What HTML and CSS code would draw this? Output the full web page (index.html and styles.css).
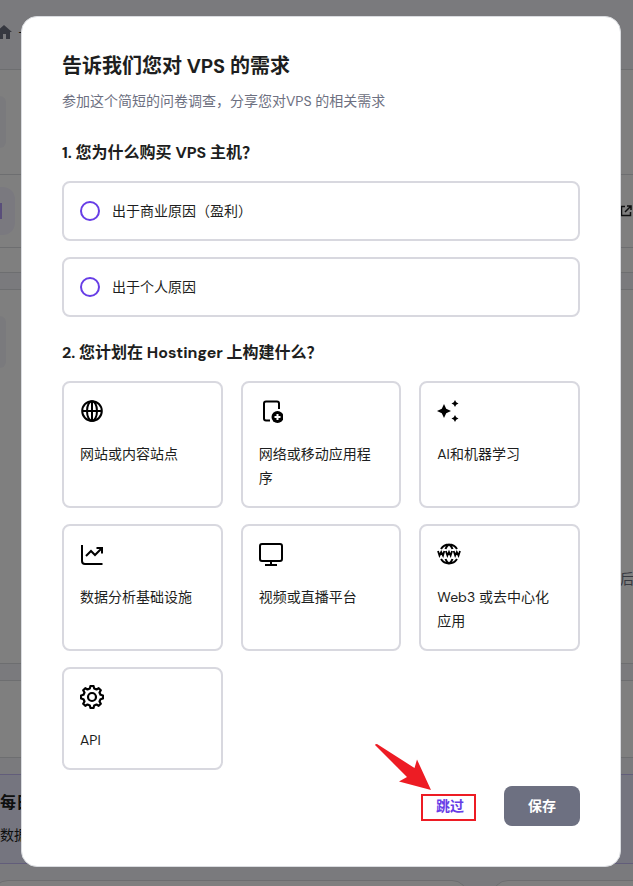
FILE: index.html
```html
<!DOCTYPE html>
<html lang="zh-CN">
<head>
  <meta charset="UTF-8" />
  <meta name="viewport" content="width=device-width, initial-scale=1.0"/>
  <title>VPS</title>
  <link rel="stylesheet" href="styles.css">
</head>
<body>
  <!-- Dashboard behind the dialog -->
  <div class="page" aria-hidden="true">
    <div class="topbar">
      <svg class="home" viewBox="0 0 12 14"><path d="M4 0 12 7H10V14H6V9H3V14H0V3.500z"/></svg>
      <span>-</span>
    </div>
    <div class="row row-tall"><i class="tile"></i></div>
    <div class="row row-link">
      <i class="tile tile-purple"></i>
      <svg class="external" viewBox="0 0 12 12"><path d="M5 1.500H1.500V10.500H10.500V7M7 1H11V5M11 1 5 7"/></svg>
    </div>
    <div class="row row-short"></div>
    <div class="panel panel-main">
      <i class="tile"></i>
      <span class="after">后</span>
    </div>
    <div class="panel panel-small"></div>
    <div class="panel promo">
      <strong>每日</strong>
      <span>数据</span>
    </div>
    <div class="bottom-cards">
      <div class="bottom-card"></div>
      <div class="bottom-card"></div>
    </div>
  </div>

  <div class="overlay">
    <form class="modal" role="dialog" aria-labelledby="title">
      <h1 id="title">告诉我们您对 VPS 的需求</h1>
      <p class="subtitle">参加这个简短的问卷调查，分享您对VPS 的相关需求</p>

      <h2 id="q1">1. 您为什么购买 VPS 主机？</h2>
      <div class="options" role="radiogroup" aria-labelledby="q1">
        <label class="option"><input type="radio" name="reason" value="business">出于商业原因（盈利）</label>
        <label class="option"><input type="radio" name="reason" value="personal">出于个人原因</label>
      </div>

      <h2 id="q2">2. 您计划在 Hostinger 上构建什么？</h2>
      <div class="cards" role="group" aria-labelledby="q2">
        <label class="card">
          <input type="checkbox" name="build" value="website">
          <svg class="icon" viewBox="0 0 24 24"><circle cx="12" cy="12" r="9.800"/><ellipse cx="12" cy="12" rx="5" ry="9.800"/><path d="M12 2V22M2 12H22"/></svg>
          <span>网站或内容站点</span>
        </label>
        <label class="card">
          <input type="checkbox" name="build" value="app">
          <svg class="icon" viewBox="0 0 24 24"><path d="M11 21.500H7Q5 21.500 5 19.500V4.500Q5 2.500 7 2.500H18Q20 2.500 20 4.500V10"/><circle class="fill" cx="18.500" cy="18" r="6"/><path class="light" d="M18.500 15V21M15.500 18H21.500"/></svg>
          <span>网络或移动应用程序</span>
        </label>
        <label class="card">
          <input type="checkbox" name="build" value="ai">
          <svg class="icon" viewBox="0 0 24 24"><path class="fill" d="M7 5 9.200 9.800 14 12 9.200 14.200 7 19 4.800 14.200 0 12 4.800 9.800zM18 1 19.200 3.300 21.500 4.500 19.200 5.700 18 8 16.800 5.700 14.500 4.500 16.800 3.300zM18 16 19.200 18.300 21.500 19.500 19.200 20.700 18 23 16.800 20.700 14.500 19.500 16.800 18.300z"/></svg>
          <span>AI和机器学习</span>
        </label>
        <label class="card">
          <input type="checkbox" name="build" value="analytics">
          <svg class="icon" viewBox="0 0 24 24"><path d="M2 3V19Q2 22 5 22H22.500M6 14 11 9 15 13 21.500 6.500M16.500 6H22V11.500"/></svg>
          <span>数据分析基础设施</span>
        </label>
        <label class="card">
          <input type="checkbox" name="build" value="video">
          <svg class="icon" viewBox="0 0 24 24"><rect x="1" y="2" width="22" height="17" rx="2"/><path d="M12 19V22M6 23H18"/></svg>
          <span>视频或直播平台</span>
        </label>
        <label class="card">
          <input type="checkbox" name="build" value="web3">
          <svg class="icon" viewBox="0 0 24 24"><path d="M4 7A9.500 9.500 0 0 1 20 7M4 17A9.500 9.500 0 0 0 20 17M8.500 7Q9.500 4 12 2.500Q14.500 4 15.500 7M8.500 17Q9.500 20 12 21.500Q14.500 20 15.500 17"/><path class="waves" d="M1 9 2.500 13.500 4.200 10 6 13.500 7.300 9M8.900 9 10.400 13.500 12 10 13.600 13.500 15.100 9M16.700 9 18.200 13.500 19.800 10 21.500 13.500 23 9"/></svg>
          <span>Web3 或去中心化应用</span>
        </label>
        <label class="card">
          <input type="checkbox" name="build" value="api">
          <svg class="icon gear" viewBox="0 0 24 24"><path d="M9.800 3.500 10.500 1H13.500L14.200 3.500 16.500 4.500 18.700 3.200 20.800 5.300 19.500 7.500 20.500 9.800 23 10.500V13.500L20.500 14.200 19.500 16.500 20.800 18.700 18.700 20.800 16.500 19.500 14.200 20.500 13.500 23H10.500L9.800 20.500 7.500 19.500 5.300 20.800 3.200 18.700 4.500 16.500 3.500 14.200 1 13.500V10.500L3.500 9.800 4.500 7.500 3.200 5.300 5.300 3.200 7.500 4.500z"/><circle cx="12" cy="12" r="4"/></svg>
          <span>API</span>
        </label>
      </div>

      <div class="actions">
        <div class="skip-wrap">
          <button type="button" class="btn btn-skip">跳过</button>
          <span class="marker"></span>
          <svg class="arrow" viewBox="0 0 56 46"><path d="M0 1Q0 0 2 0L39.500 24 42 15.500 56 46 24 37.500 32 33z"/></svg>
        </div>
        <button type="submit" class="btn btn-save">保存</button>
      </div>
    </form>
  </div>
</body>
</html>
```

FILE: styles.css
```css
:root {
  --text: #1d1e20;
  --muted: #6d7081;
  --border: #dadce0;
  --card-border: #d8d8df;
  --purple: #673de6;
  --bg: #f5f5fa;
  --red: #ed1c24;
}
* {
  box-sizing: border-box;
}
body {
  margin: 0;
  font-family: "DM Sans", Inter, "Noto Sans CJK SC", sans-serif;
  font-size: 14px;
  line-height: 24px;
  color: var(--text);
  background: var(--bg);
}

/* Dashboard */
.page {
  height: 100vh;
  overflow: hidden;
}
.topbar {
  display: flex;
  align-items: center;
  gap: 6px;
  height: 70px;
  padding-bottom: 6px;
  border-bottom: 1px solid var(--border);
}
.home {
  width: 12px;
  height: 14px;
  fill: #6d7081;
}
.row {
  display: flex;
  align-items: center;
  justify-content: space-between;
  background: #fff;
  border-bottom: 1px solid var(--border);
}
.row-tall {
  height: 105px;
}
.row-link {
  height: 73px;
}
.row-short {
  height: 25px;
}
.tile {
  width: 6px;
  height: 52px;
  border-radius: 0 12px 12px 0;
  background: var(--bg);
}
.tile-purple {
  width: 15px;
  height: 48px;
  padding: 16px 0;
  background: #f5f3ff;
}
.tile-purple::before {
  content: "";
  display: block;
  width: 2px;
  height: 16px;
  background: #b39df5;
}
.external {
  width: 12px;
  height: 12px;
  margin-right: 1px;
  fill: none;
  stroke: var(--text);
  stroke-width: 1.5;
}
.panel {
  margin-top: 16px;
  background: #fff;
  border: solid var(--border);
  border-width: 1px 0;
}
.panel-main {
  display: flex;
  justify-content: space-between;
  height: 375px;
  padding-top: 26px;
}
.after {
  align-self: flex-end;
  width: 13px;
  margin-bottom: 72px;
  color: var(--muted);
}
.panel-small {
  height: 78px;
}
.promo {
  display: flex;
  flex-direction: column;
  gap: 8px;
  height: 90px;
  padding-top: 16px;
  background: #ebebff;
  border-color: #c4baf5;
}
.promo strong {
  font-size: 16px;
}
.bottom-cards {
  display: flex;
  gap: 24px;
  margin: 16px -160px 0 0;
}
.bottom-card {
  flex: 1;
  height: 80px;
  background: #fff;
  border: 1px solid var(--border);
  border-radius: 16px;
}
.bottom-card:first-child {
  flex: 0 0 60%;
  margin-left: -8px;
}

/* Dialog */
.overlay {
  position: fixed;
  inset: 0;
  padding: 16px 12px 16px 21px;
  overflow: hidden;
  background: rgba(0, 0, 0, 0.5);
}
.modal {
  max-width: 600px;
  margin: 0 auto;
  padding: 33px 40px 40px;
  background: #fff;
  border: 1px solid var(--border);
  border-radius: 16px;
}
h1 {
  margin: 0 0 7px;
  font-size: 20px;
  line-height: 32px;
}
.subtitle {
  margin: 0;
  color: var(--muted);
}
h2 {
  margin: 24px 0 16px;
  font-size: 16px;
  line-height: 24px;
}
.subtitle + h2 {
  margin-top: 28px;
}
.options {
  display: grid;
  gap: 16px;
}
.option {
  display: flex;
  align-items: center;
  gap: 12px;
  min-height: 60px;
  padding: 16px;
  border: 2px solid var(--card-border);
  border-radius: 8px;
  cursor: pointer;
}
.option input {
  appearance: none;
  width: 20px;
  height: 20px;
  margin: 0;
  border: 2px solid var(--purple);
  border-radius: 50%;
}
.option input:checked {
  box-shadow: inset 0 0 0 3px #fff;
  background: var(--purple);
}
.cards {
  display: grid;
  grid-template-columns: repeat(3, 1fr);
  gap: 16px 18px;
}
.card {
  display: flex;
  flex-direction: column;
  gap: 19px;
  padding: 16px;
  border: 2px solid var(--card-border);
  border-radius: 8px;
  cursor: pointer;
}
.card input {
  appearance: none;
  position: absolute;
  margin: 0;
}
.card:has(input:checked) {
  border-color: var(--purple);
}
.icon {
  width: 24px;
  height: 24px;
  fill: none;
  stroke: #000;
  stroke-width: 2;
}
.icon .fill {
  fill: #000;
  stroke: none;
}
.icon .light {
  stroke: #fff;
}
.icon .waves {
  stroke-width: 1.8;
}
.gear {
  stroke-linejoin: round;
  stroke-width: 2.2;
}
.actions {
  display: flex;
  justify-content: flex-end;
  gap: 16px;
  margin-top: 16px;
}
.btn {
  height: 40px;
  padding: 0 24px;
  border: none;
  border-radius: 8px;
  font: inherit;
  font-weight: 700;
  cursor: pointer;
}
.btn-skip {
  background: none;
  color: var(--purple);
}
.btn-save {
  background: var(--muted);
  color: #fff;
}

/* Callout on the skip button */
.skip-wrap {
  position: relative;
}
.marker {
  position: absolute;
  inset: 8px 12px 5px 9px;
  border: 2px solid var(--red);
  pointer-events: none;
}
.arrow {
  position: absolute;
  right: 57px;
  bottom: 36px;
  width: 56px;
  height: 46px;
  fill: var(--red);
  pointer-events: none;
}
```
